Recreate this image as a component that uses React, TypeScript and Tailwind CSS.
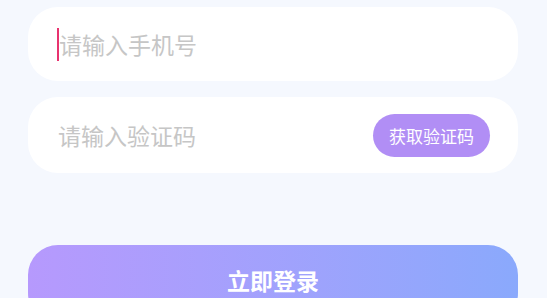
import React from "react";

export default function App() {
  return (
    <div
      className="w-[547px] h-[298px] overflow-hidden bg-[#f5f8fe] pt-[7px] pl-[28px] pr-[29px]"
      style={{ fontFamily: '"Noto Sans CJK SC", "Noto Sans", sans-serif' }}
    >
      <div className="h-[74px] rounded-[30px] bg-white flex items-center pl-[29px]">
        <span className="w-[2px] h-[33px] bg-[#e8336f] mr-[0px]" />
        <span className="text-[23px] text-[#c6c6c6] leading-none">请输入手机号</span>
      </div>
      <div className="h-[76px] mt-[16px] rounded-[30px] bg-white flex items-center justify-between pl-[30px] pr-[28px]">
        <span className="text-[23px] text-[#c6c6c6] leading-none">请输入验证码</span>
        <button className="w-[117px] h-[43px] rounded-full bg-[#b18ef5] text-white text-[17px] leading-none flex items-center justify-center">
          获取验证码
        </button>
      </div>
      <div className="h-[78px] mt-[72px] pb-[8px] rounded-[30px] bg-gradient-to-r from-[#b699fd] to-[#8aa9fc] flex items-center justify-center">
        <span className="text-white text-[23px] font-bold leading-none">立即登录</span>
      </div>
    </div>
  );
}
